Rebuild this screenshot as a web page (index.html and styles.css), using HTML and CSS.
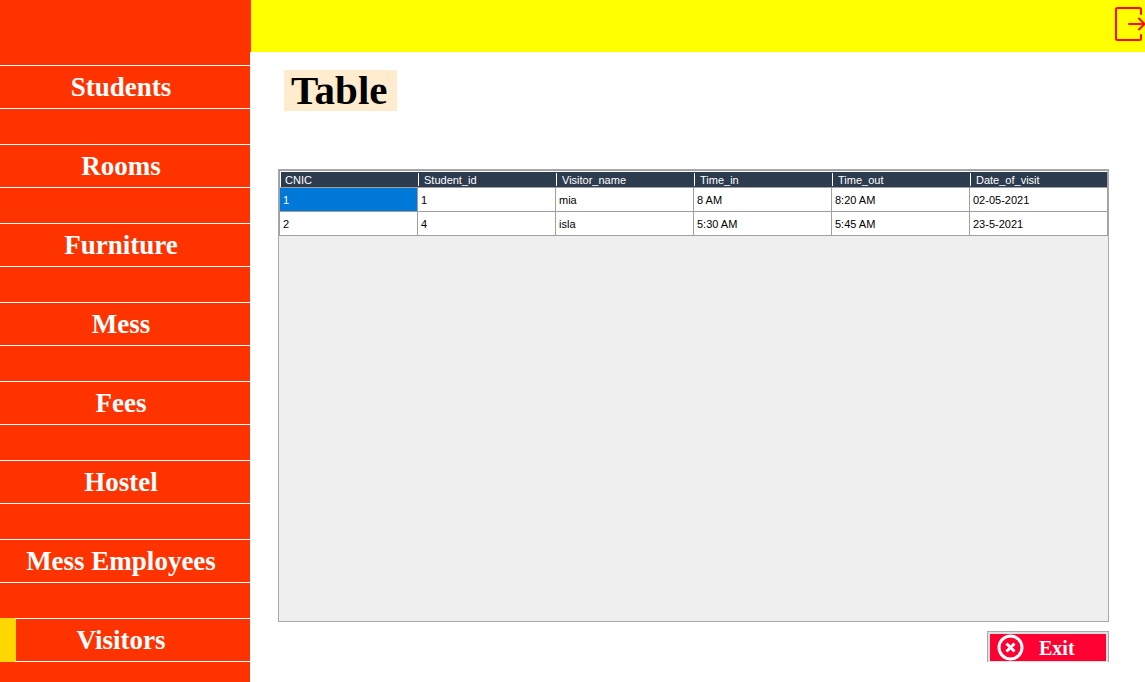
FILE: index.html
```html
<!DOCTYPE html>
<html lang="en">
<head>
<meta charset="utf-8">
<title>Visitors</title>
<link rel="stylesheet" href="styles.css">
</head>
<body>
<div class="app">
  <header class="topbar">
    <div class="topbar-brand"></div>
    <button class="logout" type="button" aria-label="Log out">
      <svg width="31" height="36" viewBox="0 0 31 36" fill="none" stroke="#ff0a00" stroke-width="2" stroke-linecap="round" stroke-linejoin="round" aria-hidden="true">
        <path d="M27 8V3.500Q27 2 25.500 2H3.500Q2 2 2 3.500V32.500Q2 34 3.500 34H25.500Q27 34 27 32.500V29"/>
        <path d="M15 18H30M25 12.500L30.500 18L25 23.500"/>
      </svg>
    </button>
  </header>
  <nav class="sidebar">
    <button class="nav-item" type="button">Students</button>
    <button class="nav-item" type="button">Rooms</button>
    <button class="nav-item" type="button">Furniture</button>
    <button class="nav-item" type="button">Mess</button>
    <button class="nav-item" type="button">Fees</button>
    <button class="nav-item" type="button">Hostel</button>
    <button class="nav-item" type="button">Mess Employees</button>
    <button class="nav-item nav-item-active" type="button">Visitors</button>
  </nav>
  <main class="content">
    <h1 class="title">Table</h1>
    <div class="grid">
      <table class="visitors">
        <thead>
          <tr><th scope="col">CNIC</th><th scope="col">Student_id</th><th scope="col">Visitor_name</th><th scope="col">Time_in</th><th scope="col">Time_out</th><th scope="col">Date_of_visit</th></tr>
        </thead>
        <tbody>
          <tr><td class="selected">1</td><td>1</td><td>mia</td><td>8 AM</td><td>8:20 AM</td><td>02-05-2021</td></tr>
          <tr><td>2</td><td>4</td><td>isla</td><td>5:30 AM</td><td>5:45 AM</td><td>23-5-2021</td></tr>
        </tbody>
      </table>
    </div>
    <div class="exit-frame">
      <button class="exit" type="button">
        <svg width="27" height="27" viewBox="0 0 27 27" fill="none" stroke="#fff" stroke-width="3" aria-hidden="true">
          <circle cx="13.500" cy="13.500" r="11.500"/>
          <path d="M9.500 9.500L17.500 17.500M17.500 9.500L9.500 17.500"/>
        </svg>
        <span>Exit</span>
      </button>
    </div>
  </main>
</div>
</body>
</html>
```
FILE: styles.css
```css
* {
  box-sizing: border-box;
}

body {
  margin: 0;
  background: #fff;
  font-family: "Liberation Sans", Arial, sans-serif;
}

button {
  margin: 0;
  padding: 0;
  border: 0;
  background: none;
  font-family: "Liberation Serif", "Times New Roman", serif;
  font-weight: bold;
  color: #fff;
  cursor: pointer;
}

.app {
  display: grid;
  grid-template-columns: 250px 1fr;
  grid-template-rows: 52px 1fr;
  min-height: 100vh;
}

.topbar {
  grid-column: 1 / -1;
  display: flex;
  justify-content: space-between;
  align-items: center;
  background: #ff0;
}

.topbar-brand {
  width: 251px;
  height: 100%;
  background: #f30;
}

.logout {
  height: 36px;
  margin-bottom: 4px;
}

.logout svg,
.exit svg {
  display: block;
}

.sidebar {
  display: flex;
  flex-direction: column;
  gap: 35px;
  padding: 13px 0 20px;
  background: #f30;
}

.nav-item {
  height: 44px;
  padding: 0 8px 0 0;
  border-top: 1px solid #fff;
  border-bottom: 1px solid #fff;
  font-size: 27px;
  line-height: 42px;
}

.nav-item-active {
  border-image: linear-gradient(to right, #ffd700 16px, #fff 16px) 1;
  border-width: 1px 0;
  background: linear-gradient(#ffd700, #ffd700) left / 16px 100% no-repeat;
}

.content {
  display: flex;
  flex-direction: column;
  padding: 18px 36px 20px 28px;
}

.title {
  align-self: flex-start;
  margin: 0 0 58px 6px;
  padding: 0 10px 0 7px;
  background: #ffebcd;
  font-family: "Liberation Serif", "Times New Roman", serif;
  font-size: 41px;
  line-height: 41px;
}

.grid {
  flex: 1;
  border: 1px solid #a9a9ad;
  background: #efefef;
}

.visitors {
  width: 100%;
  table-layout: fixed;
  border-collapse: separate;
  border-spacing: 0;
  border-top: 1px solid #a0a0a0;
  border-left: 1px solid #a0a0a0;
  font-size: 11px;
  text-align: left;
}

.visitors th {
  height: 17px;
  padding: 1px 0 0 6px;
  border-top: 1px solid #fff;
  border-bottom: 1px solid #a0a0a0;
  background: linear-gradient(#fff, #fff) 0 1px / 1px 13px no-repeat #2c3b4e;
  color: #fff;
  font-weight: normal;
  line-height: 14px;
}

.visitors th:first-child {
  padding-left: 5px;
  background-position: 0 0;
  background-size: 1px 100%;
}

.visitors th:last-child {
  border-right: 1px solid #a0a0a0;
}

.visitors td {
  height: 24px;
  padding: 0 0 0 3px;
  border-right: 1px solid #a0a0a0;
  border-bottom: 1px solid #a0a0a0;
  background: #fff;
  color: #000;
}

.visitors .selected {
  background: #0078d7;
  color: #fff;
}

.exit-frame {
  align-self: flex-end;
  width: 122px;
  height: 31px;
  margin-top: 9px;
  padding: 2px 2px 1px;
  border: 1px solid #a9a9ad;
  border-bottom: 0;
  background: #e1e1e1;
}

.exit {
  display: flex;
  align-items: center;
  gap: 15px;
  width: 100%;
  height: 27px;
  padding-left: 7px;
  background: #ff0033;
  font-size: 20px;
  line-height: 26px;
}
```
